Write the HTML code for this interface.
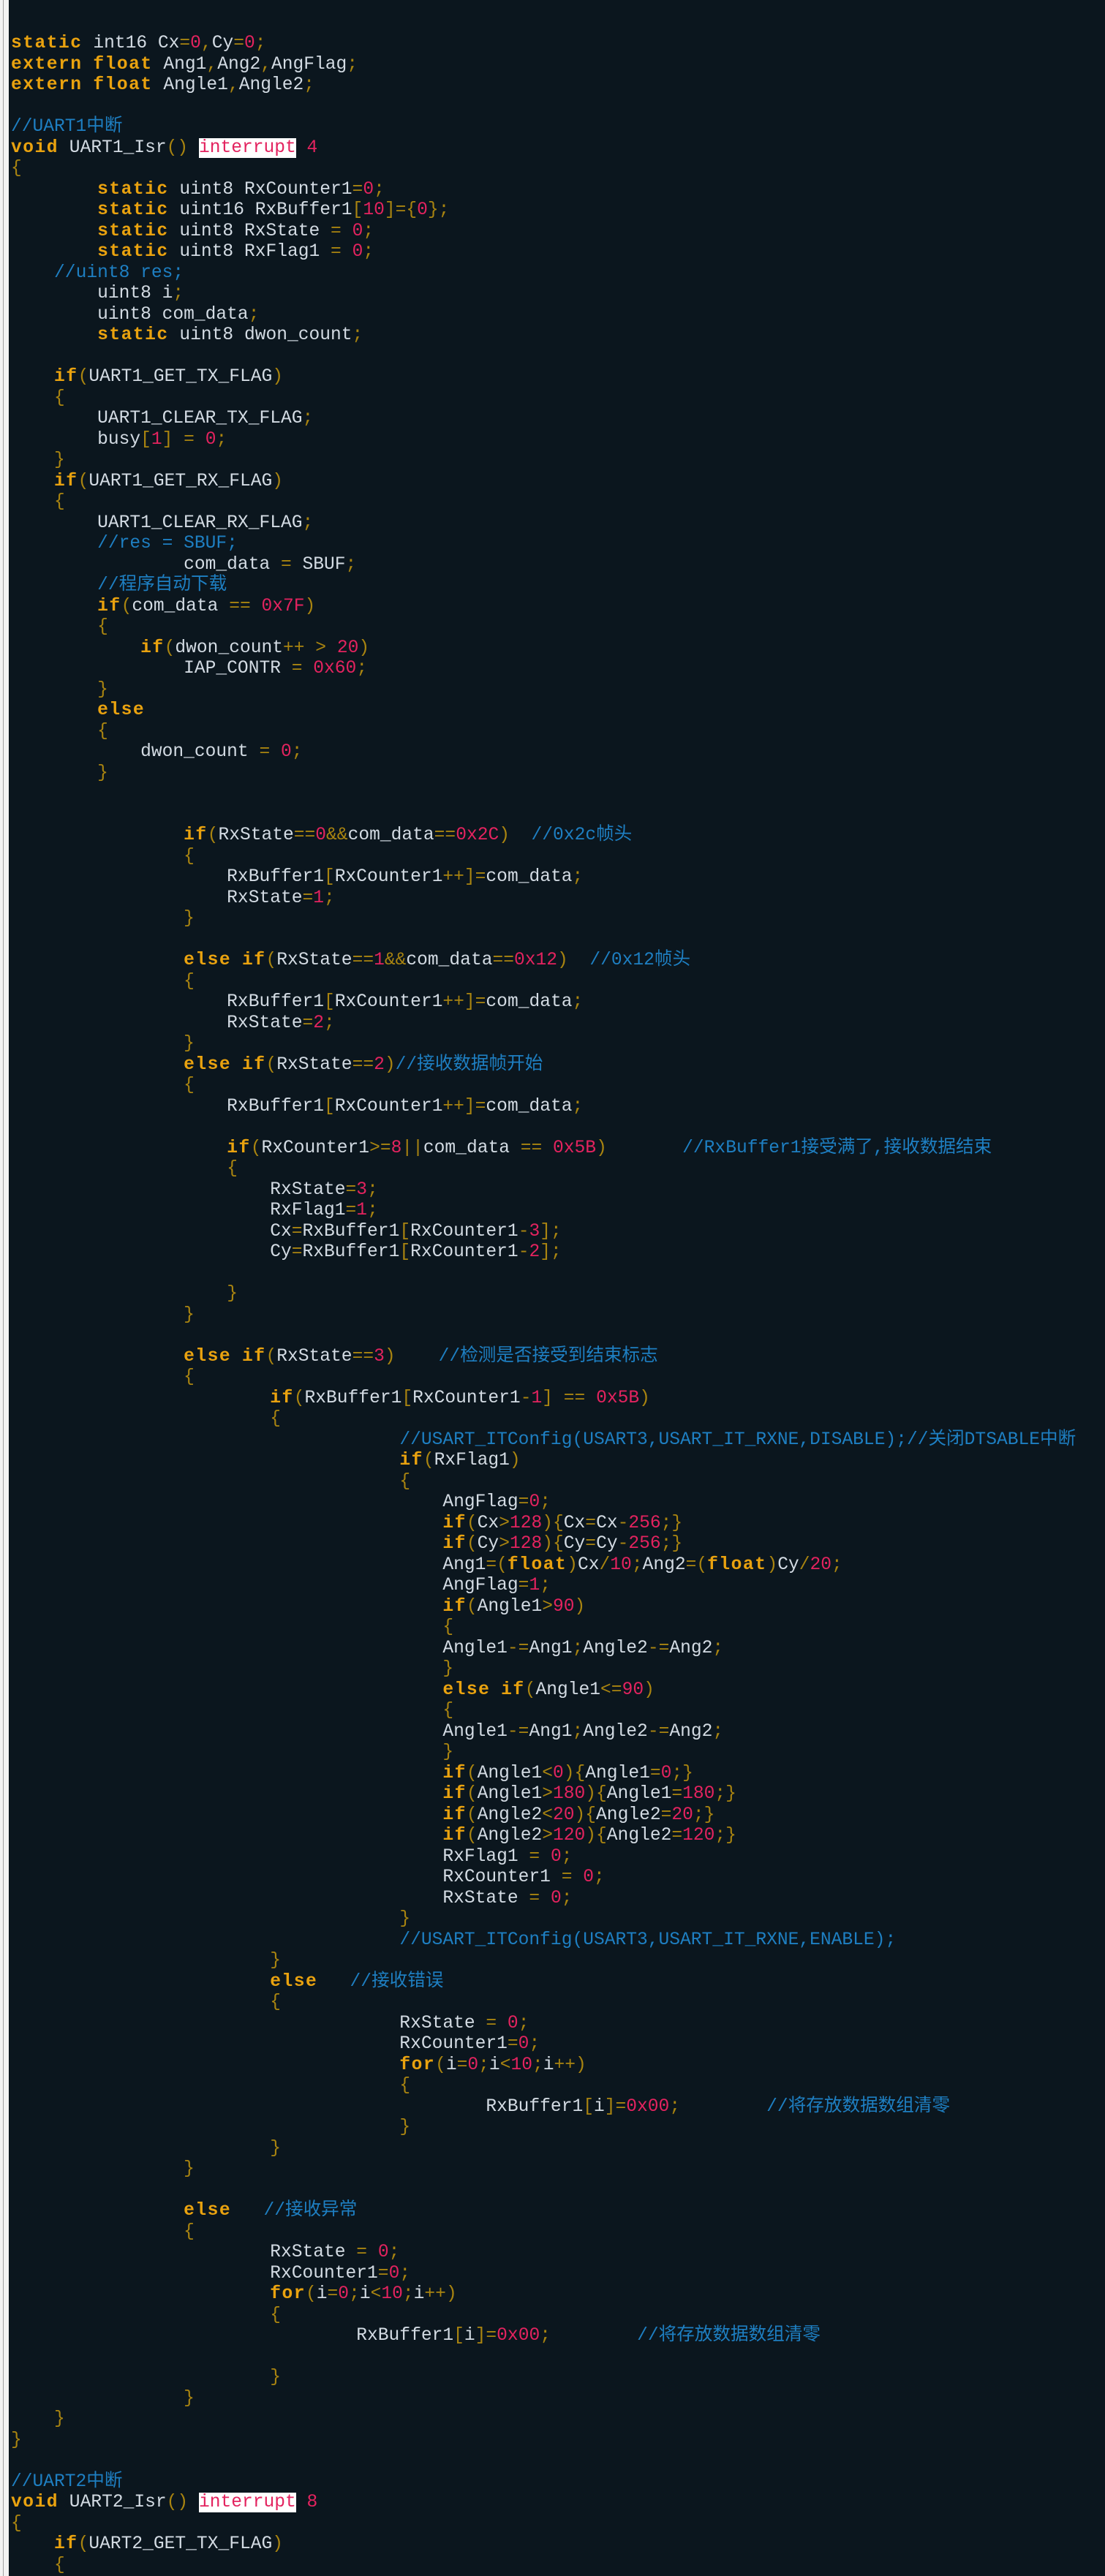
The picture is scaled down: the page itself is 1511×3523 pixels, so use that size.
<!DOCTYPE html>
<html><head><meta charset="utf-8">
<style>
html,body{margin:0;padding:0;}
body{width:1511px;height:3523px;background:#0b161e;overflow:hidden;position:relative;}
#g{position:absolute;left:0;top:0;width:12px;height:3523px;background:#f3f3f3;}
#g:after{content:"";position:absolute;left:4px;top:0;width:1px;height:100%;background:#a0a0a0;}
pre{position:absolute;left:15px;top:46px;margin:0;font-family:"Liberation Mono","Noto Sans CJK SC",monospace;font-size:24.6px;line-height:28.5px;color:#d3dbe3;white-space:pre;}
.k{color:#e9a20f;font-weight:bold;letter-spacing:1.5px;}
.n{color:#e3235f;}
.p{color:#a98410;}
.c{color:#1e7fc2;}
.i{background:#fff;color:#e3235f;}
</style></head><body>
<div id="g"></div>
<pre><span class="k">static</span> int16 Cx<span class="p">=</span><span class="n">0</span><span class="p">,</span>Cy<span class="p">=</span><span class="n">0</span><span class="p">;</span>
<span class="k">extern</span> <span class="k">float</span> Ang1<span class="p">,</span>Ang2<span class="p">,</span>AngFlag<span class="p">;</span>
<span class="k">extern</span> <span class="k">float</span> Angle1<span class="p">,</span>Angle2<span class="p">;</span>

<span class="c">//UART1中断</span>
<span class="k">void</span> UART1_Isr<span class="p">()</span> <span class="i">interrupt</span> <span class="n">4</span>
<span class="p">{</span>
        <span class="k">static</span> uint8 RxCounter1<span class="p">=</span><span class="n">0</span><span class="p">;</span>
        <span class="k">static</span> uint16 RxBuffer1<span class="p">[</span><span class="n">10</span><span class="p">]={</span><span class="n">0</span><span class="p">};</span>
        <span class="k">static</span> uint8 RxState <span class="p">=</span> <span class="n">0</span><span class="p">;</span>
        <span class="k">static</span> uint8 RxFlag1 <span class="p">=</span> <span class="n">0</span><span class="p">;</span>
    <span class="c">//uint8 res;</span>
        uint8 i<span class="p">;</span>
        uint8 com_data<span class="p">;</span>
        <span class="k">static</span> uint8 dwon_count<span class="p">;</span>

    <span class="k">if</span><span class="p">(</span>UART1_GET_TX_FLAG<span class="p">)</span>
    <span class="p">{</span>
        UART1_CLEAR_TX_FLAG<span class="p">;</span>
        busy<span class="p">[</span><span class="n">1</span><span class="p">]</span> <span class="p">=</span> <span class="n">0</span><span class="p">;</span>
    <span class="p">}</span>
    <span class="k">if</span><span class="p">(</span>UART1_GET_RX_FLAG<span class="p">)</span>
    <span class="p">{</span>
        UART1_CLEAR_RX_FLAG<span class="p">;</span>
        <span class="c">//res = SBUF;</span>
                com_data <span class="p">=</span> SBUF<span class="p">;</span>
        <span class="c">//程序自动下载</span>
        <span class="k">if</span><span class="p">(</span>com_data <span class="p">==</span> <span class="n">0x7F</span><span class="p">)</span>
        <span class="p">{</span>
            <span class="k">if</span><span class="p">(</span>dwon_count<span class="p">++</span> <span class="p">&gt;</span> <span class="n">20</span><span class="p">)</span>
                IAP_CONTR <span class="p">=</span> <span class="n">0x60</span><span class="p">;</span>
        <span class="p">}</span>
        <span class="k">else</span>
        <span class="p">{</span>
            dwon_count <span class="p">=</span> <span class="n">0</span><span class="p">;</span>
        <span class="p">}</span>


                <span class="k">if</span><span class="p">(</span>RxState<span class="p">==</span><span class="n">0</span><span class="p">&amp;&amp;</span>com_data<span class="p">==</span><span class="n">0x2C</span><span class="p">)</span>  <span class="c">//0x2c帧头</span>
                <span class="p">{</span>
                    RxBuffer1<span class="p">[</span>RxCounter1<span class="p">++]=</span>com_data<span class="p">;</span>
                    RxState<span class="p">=</span><span class="n">1</span><span class="p">;</span>
                <span class="p">}</span>

                <span class="k">else</span> <span class="k">if</span><span class="p">(</span>RxState<span class="p">==</span><span class="n">1</span><span class="p">&amp;&amp;</span>com_data<span class="p">==</span><span class="n">0x12</span><span class="p">)</span>  <span class="c">//0x12帧头</span>
                <span class="p">{</span>
                    RxBuffer1<span class="p">[</span>RxCounter1<span class="p">++]=</span>com_data<span class="p">;</span>
                    RxState<span class="p">=</span><span class="n">2</span><span class="p">;</span>
                <span class="p">}</span>
                <span class="k">else</span> <span class="k">if</span><span class="p">(</span>RxState<span class="p">==</span><span class="n">2</span><span class="p">)</span><span class="c">//接收数据帧开始</span>
                <span class="p">{</span>
                    RxBuffer1<span class="p">[</span>RxCounter1<span class="p">++]=</span>com_data<span class="p">;</span>

                    <span class="k">if</span><span class="p">(</span>RxCounter1<span class="p">&gt;=</span><span class="n">8</span><span class="p">||</span>com_data <span class="p">==</span> <span class="n">0x5B</span><span class="p">)</span>       <span class="c">//RxBuffer1接受满了,接收数据结束</span>
                    <span class="p">{</span>
                        RxState<span class="p">=</span><span class="n">3</span><span class="p">;</span>
                        RxFlag1<span class="p">=</span><span class="n">1</span><span class="p">;</span>
                        Cx<span class="p">=</span>RxBuffer1<span class="p">[</span>RxCounter1<span class="p">-</span><span class="n">3</span><span class="p">];</span>
                        Cy<span class="p">=</span>RxBuffer1<span class="p">[</span>RxCounter1<span class="p">-</span><span class="n">2</span><span class="p">];</span>

                    <span class="p">}</span>
                <span class="p">}</span>

                <span class="k">else</span> <span class="k">if</span><span class="p">(</span>RxState<span class="p">==</span><span class="n">3</span><span class="p">)</span>    <span class="c">//检测是否接受到结束标志</span>
                <span class="p">{</span>
                        <span class="k">if</span><span class="p">(</span>RxBuffer1<span class="p">[</span>RxCounter1<span class="p">-</span><span class="n">1</span><span class="p">]</span> <span class="p">==</span> <span class="n">0x5B</span><span class="p">)</span>
                        <span class="p">{</span>
                                    <span class="c">//USART_ITConfig(USART3,USART_IT_RXNE,DISABLE);//关闭DTSABLE中断</span>
                                    <span class="k">if</span><span class="p">(</span>RxFlag1<span class="p">)</span>
                                    <span class="p">{</span>
                                        AngFlag<span class="p">=</span><span class="n">0</span><span class="p">;</span>
                                        <span class="k">if</span><span class="p">(</span>Cx<span class="p">&gt;</span><span class="n">128</span><span class="p">){</span>Cx<span class="p">=</span>Cx<span class="p">-</span><span class="n">256</span><span class="p">;}</span>
                                        <span class="k">if</span><span class="p">(</span>Cy<span class="p">&gt;</span><span class="n">128</span><span class="p">){</span>Cy<span class="p">=</span>Cy<span class="p">-</span><span class="n">256</span><span class="p">;}</span>
                                        Ang1<span class="p">=(</span><span class="k">float</span><span class="p">)</span>Cx<span class="p">/</span><span class="n">10</span><span class="p">;</span>Ang2<span class="p">=(</span><span class="k">float</span><span class="p">)</span>Cy<span class="p">/</span><span class="n">20</span><span class="p">;</span>
                                        AngFlag<span class="p">=</span><span class="n">1</span><span class="p">;</span>
                                        <span class="k">if</span><span class="p">(</span>Angle1<span class="p">&gt;</span><span class="n">90</span><span class="p">)</span>
                                        <span class="p">{</span>
                                        Angle1<span class="p">-=</span>Ang1<span class="p">;</span>Angle2<span class="p">-=</span>Ang2<span class="p">;</span>
                                        <span class="p">}</span>
                                        <span class="k">else</span> <span class="k">if</span><span class="p">(</span>Angle1<span class="p">&lt;=</span><span class="n">90</span><span class="p">)</span>
                                        <span class="p">{</span>
                                        Angle1<span class="p">-=</span>Ang1<span class="p">;</span>Angle2<span class="p">-=</span>Ang2<span class="p">;</span>
                                        <span class="p">}</span>
                                        <span class="k">if</span><span class="p">(</span>Angle1<span class="p">&lt;</span><span class="n">0</span><span class="p">){</span>Angle1<span class="p">=</span><span class="n">0</span><span class="p">;}</span>
                                        <span class="k">if</span><span class="p">(</span>Angle1<span class="p">&gt;</span><span class="n">180</span><span class="p">){</span>Angle1<span class="p">=</span><span class="n">180</span><span class="p">;}</span>
                                        <span class="k">if</span><span class="p">(</span>Angle2<span class="p">&lt;</span><span class="n">20</span><span class="p">){</span>Angle2<span class="p">=</span><span class="n">20</span><span class="p">;}</span>
                                        <span class="k">if</span><span class="p">(</span>Angle2<span class="p">&gt;</span><span class="n">120</span><span class="p">){</span>Angle2<span class="p">=</span><span class="n">120</span><span class="p">;}</span>
                                        RxFlag1 <span class="p">=</span> <span class="n">0</span><span class="p">;</span>
                                        RxCounter1 <span class="p">=</span> <span class="n">0</span><span class="p">;</span>
                                        RxState <span class="p">=</span> <span class="n">0</span><span class="p">;</span>
                                    <span class="p">}</span>
                                    <span class="c">//USART_ITConfig(USART3,USART_IT_RXNE,ENABLE);</span>
                        <span class="p">}</span>
                        <span class="k">else</span>   <span class="c">//接收错误</span>
                        <span class="p">{</span>
                                    RxState <span class="p">=</span> <span class="n">0</span><span class="p">;</span>
                                    RxCounter1<span class="p">=</span><span class="n">0</span><span class="p">;</span>
                                    <span class="k">for</span><span class="p">(</span>i<span class="p">=</span><span class="n">0</span><span class="p">;</span>i<span class="p">&lt;</span><span class="n">10</span><span class="p">;</span>i<span class="p">++)</span>
                                    <span class="p">{</span>
                                            RxBuffer1<span class="p">[</span>i<span class="p">]=</span><span class="n">0x00</span><span class="p">;</span>        <span class="c">//将存放数据数组清零</span>
                                    <span class="p">}</span>
                        <span class="p">}</span>
                <span class="p">}</span>

                <span class="k">else</span>   <span class="c">//接收异常</span>
                <span class="p">{</span>
                        RxState <span class="p">=</span> <span class="n">0</span><span class="p">;</span>
                        RxCounter1<span class="p">=</span><span class="n">0</span><span class="p">;</span>
                        <span class="k">for</span><span class="p">(</span>i<span class="p">=</span><span class="n">0</span><span class="p">;</span>i<span class="p">&lt;</span><span class="n">10</span><span class="p">;</span>i<span class="p">++)</span>
                        <span class="p">{</span>
                                RxBuffer1<span class="p">[</span>i<span class="p">]=</span><span class="n">0x00</span><span class="p">;</span>        <span class="c">//将存放数据数组清零</span>

                        <span class="p">}</span>
                <span class="p">}</span>
    <span class="p">}</span>
<span class="p">}</span>

<span class="c">//UART2中断</span>
<span class="k">void</span> UART2_Isr<span class="p">()</span> <span class="i">interrupt</span> <span class="n">8</span>
<span class="p">{</span>
    <span class="k">if</span><span class="p">(</span>UART2_GET_TX_FLAG<span class="p">)</span>
    <span class="p">{</span>
</pre>
</body></html>
